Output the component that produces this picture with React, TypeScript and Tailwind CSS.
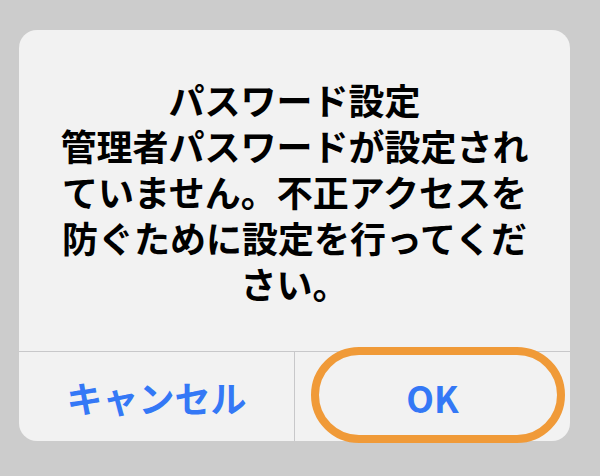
import { FC } from 'react';

const font = { fontFamily: '"Noto Sans CJK JP", "Noto Sans", sans-serif' };

const App: FC = () => {
  return (
    <div className="w-[600px] h-[476px] bg-[#cccccc] pt-[30px] pl-[19px]" style={font}>
      <div className="w-[551px] h-[411px] bg-[#f2f2f2] rounded-[18px] flex flex-col overflow-visible">
        <div className="flex-1 flex items-center justify-center px-6">
          <p className="text-center font-bold text-black text-[36px] leading-[46px] tracking-normal">
            パスワード設定
            <br />
            管理者パスワードが設定され
            <br />
            ていません。不正アクセスを
            <br />
            防ぐために設定を行ってくだ
            <br />
            さい。
          </p>
        </div>
        <div className="h-[90px] flex border-t border-[#c8c8ca]">
          <button className="flex-1 flex items-center justify-center border-r border-[#c8c8ca] text-[36px] font-bold text-[#3478f6]">
            キャンセル
          </button>
          <button className="relative flex-1 flex items-center justify-center text-[36px] font-bold text-[#3478f6]">
            OK
            <span className="absolute left-[16px] right-[5px] top-[-5px] bottom-[-2px] rounded-full border-[8px] border-[#f09a38]" />
          </button>
        </div>
      </div>
    </div>
  );
};

export default App;
